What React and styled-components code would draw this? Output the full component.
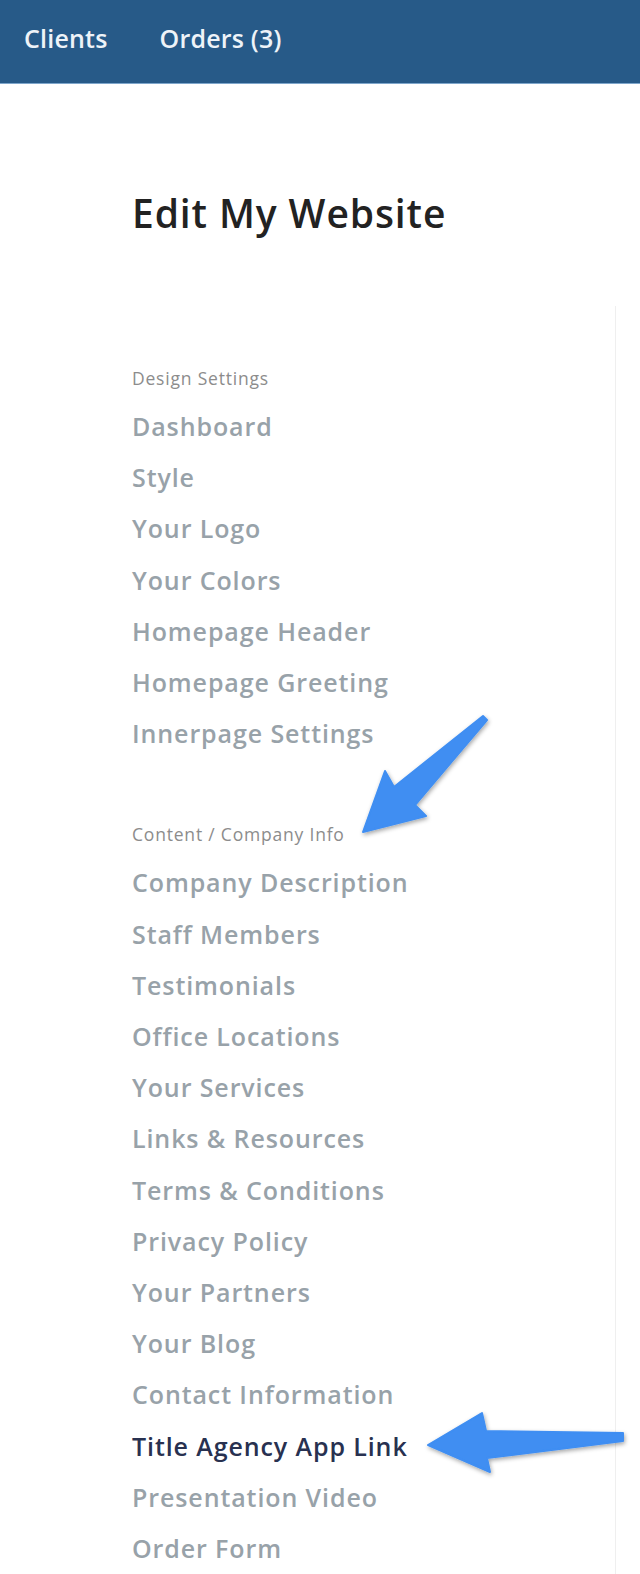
import React from 'react';
import styled, { createGlobalStyle } from 'styled-components';

const GlobalStyle = createGlobalStyle`
  html, body {
    margin: 0;
    padding: 0;
    background: #fff;
    font-family: "Open Sans", "Liberation Sans", sans-serif;
  }
`;

const Page = styled.div`
  position: relative;
  width: 640px;
  min-height: 1574px;
  overflow: hidden;
`;

const TopBar = styled.nav`
  height: 84px;
  box-sizing: border-box;
  background: #275a88;
  border-bottom: 1px solid #7ea6cb;
  display: flex;
  align-items: center;
  gap: 52px;
  padding: 0 0 8px 24px;
`;

const TopLink = styled.a`
  color: #eef3f8;
  font-size: 25px;
  font-weight: 600;
  letter-spacing: 0.2px;
  text-decoration: none;
`;

const Title = styled.h1`
  margin: 105px 0 69px 132px;
  font-size: 39px;
  line-height: 48px;
  font-weight: 600;
  letter-spacing: 0.9px;
  color: #222;
`;

const Sidebar = styled.aside`
  width: 616px;
  box-sizing: border-box;
  padding: 61px 0 0 132px;
  border-right: 1px solid #efefef;
  min-height: 1300px;
`;

const Section = styled.section`
  & + & {
    margin-top: 64px;
  }
`;

const Label = styled.div`
  font-size: 17.5px;
  line-height: 22px;
  letter-spacing: 0.8px;
  color: #8c8c8c;
  margin-bottom: 12px;
`;

const Item = styled.a`
  display: block;
  font-size: 25px;
  line-height: 51.2px;
  font-weight: 600;
  letter-spacing: 0.9px;
  color: ${(p) => (p.$active ? '#283150' : '#98a2a9')};
  text-decoration: none;
`;

const Arrow = styled.svg`
  position: absolute;
  left: 0;
  top: 0;
  pointer-events: none;
`;

const sections = [
  {
    label: 'Design Settings',
    items: [
      'Dashboard',
      'Style',
      'Your Logo',
      'Your Colors',
      'Homepage Header',
      'Homepage Greeting',
      'Innerpage Settings',
    ],
  },
  {
    label: 'Content / Company Info',
    items: [
      'Company Description',
      'Staff Members',
      'Testimonials',
      'Office Locations',
      'Your Services',
      'Links & Resources',
      'Terms & Conditions',
      'Privacy Policy',
      'Your Partners',
      'Your Blog',
      'Contact Information',
      'Title Agency App Link',
      'Presentation Video',
      'Order Form',
    ],
  },
];

export default function App() {
  return (
    <Page>
      <GlobalStyle />
      <TopBar>
        <TopLink href="#">Clients</TopLink>
        <TopLink href="#">Orders (3)</TopLink>
      </TopBar>
      <Title>Edit My Website</Title>
      <Sidebar>
        {sections.map((s) => (
          <Section key={s.label}>
            <Label>{s.label}</Label>
            {s.items.map((it) => (
              <Item key={it} href="#" $active={it === 'Title Agency App Link'}>
                {it}
              </Item>
            ))}
          </Section>
        ))}
      </Sidebar>
      <Arrow width="640" height="1574" viewBox="0 0 640 1574">
        <defs>
          <filter id="sh" x="-20%" y="-20%" width="140%" height="140%">
            <feDropShadow dx="1" dy="2" stdDeviation="2" floodColor="#000" floodOpacity="0.35" />
          </filter>
        </defs>
        <g fill="#3f8ef2" stroke="#3f8ef2" strokeWidth="2" strokeLinejoin="round" filter="url(#sh)">
          <polygon points="487,720 415,805 426,816 363,832 385,771 394,787 483,716" />
          <polygon points="623,1433 623,1441 487,1458 490,1472 428,1445 482,1413 486,1431" />
        </g>
      </Arrow>
    </Page>
  );
}
